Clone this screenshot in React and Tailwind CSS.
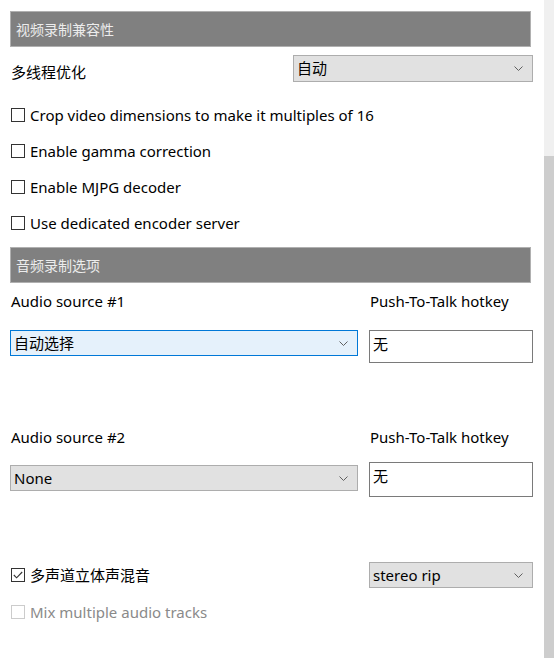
import React from 'react'

function Chevron() {
  return (
    <svg width="9" height="5" viewBox="0 0 9 5" className="shrink-0">
      <path d="M0.5 0.5 L4.5 4.5 L8.5 0.5" stroke="#606060" strokeWidth="1" fill="none" />
    </svg>
  )
}

function Header({ children }) {
  return (
    <div className="w-[521px] h-[36px] bg-[#808080] border border-[#b0b0b0] flex items-center pl-[5px] text-[14px] text-[#ececec]">
      {children}
    </div>
  )
}

function Select({ value, className, focused }) {
  const tone = focused
    ? 'bg-[#e5f1fb] border-[#0078d7]'
    : 'bg-[#e1e1e1] border-[#adadad]'
  return (
    <div className={`flex items-center justify-between border pl-[3px] pr-[9px] ${tone} ${className}`}>
      <span>{value}</span>
      <Chevron />
    </div>
  )
}

function Check({ label, checked, disabled }) {
  return (
    <div className={`flex items-center gap-[5px] ${disabled ? 'text-[#8a8a8a]' : ''}`}>
      <span className={`w-[14px] h-[14px] border flex items-center justify-center bg-white ${disabled ? 'border-[#cccccc]' : 'border-[#333333]'}`}>
        {checked && (
          <svg width="10" height="8" viewBox="0 0 10 8">
            <path d="M0.8 4 L3.6 6.8 L9.2 1" stroke="#333" strokeWidth="1.1" fill="none" />
          </svg>
        )}
      </span>
      <span>{label}</span>
    </div>
  )
}

export default function App() {
  return (
    <div className="flex w-[554px] h-[658px] overflow-hidden bg-white text-black font-['Noto_Sans','Noto_Sans_CJK_SC',sans-serif] text-[15px]">
      <div className="flex-1 pl-[10px] pr-[11px] pt-[11px]">
        <Header>视频录制兼容性</Header>

        <div className="mt-[8px] h-[27px] flex justify-between items-start">
          <span className="mt-[4px] leading-[27px] pl-[1px]">多线程优化</span>
          <Select value="自动" className="w-[240px] h-[27px]" />
        </div>

        <div className="mt-[15px] pl-[1px]">
          <div className="h-[36px] flex items-center">
            <Check label="Crop video dimensions to make it multiples of 16" />
          </div>
          <div className="h-[36px] flex items-center">
            <Check label="Enable gamma correction" />
          </div>
          <div className="h-[36px] flex items-center">
            <Check label="Enable MJPG decoder" />
          </div>
          <div className="h-[36px] flex items-center">
            <Check label="Use dedicated encoder server" />
          </div>
        </div>

        <div className="mt-[6px]">
          <Header>音频录制选项</Header>
        </div>

        <div className="flex gap-[11px]">
          <div className="w-[348px]">
            <div className="h-[36px] flex items-center pl-[1px]">Audio source #1</div>
            <Select value="自动选择" focused className="mt-[11px] h-[26px]" />
          </div>
          <div className="flex-1">
            <div className="h-[36px] flex items-center pl-[1px]">Push-To-Talk hotkey</div>
            <div className="mt-[11px] h-[33px] border border-[#7a7a7a] pl-[3px] pt-[2px]">无</div>
          </div>
        </div>

        <div className="flex gap-[11px] mt-[56px]">
          <div className="w-[348px]">
            <div className="h-[36px] flex items-center pl-[1px]">Audio source #2</div>
            <Select value="None" className="mt-[10px] h-[26px]" />
          </div>
          <div className="flex-1">
            <div className="h-[36px] flex items-center pl-[1px]">Push-To-Talk hotkey</div>
            <div className="mt-[7px] h-[35px] border border-[#7a7a7a] pl-[3px] pt-[2px]">无</div>
          </div>
        </div>

        <div className="mt-[65px] flex items-center justify-between pl-[1px]">
          <Check label="多声道立体声混音" checked />
          <Select value="stereo rip" className="w-[164px] h-[26px]" />
        </div>

        <div className="mt-[6px] h-[36px] flex items-center pl-[1px]">
          <Check label="Mix multiple audio tracks" disabled />
        </div>
      </div>

      <div className="w-[10px] flex flex-col">
        <div className="h-[156px] bg-[#f0f0f0]" />
        <div className="flex-1 bg-[#cdcdcd]" />
      </div>
    </div>
  )
}
